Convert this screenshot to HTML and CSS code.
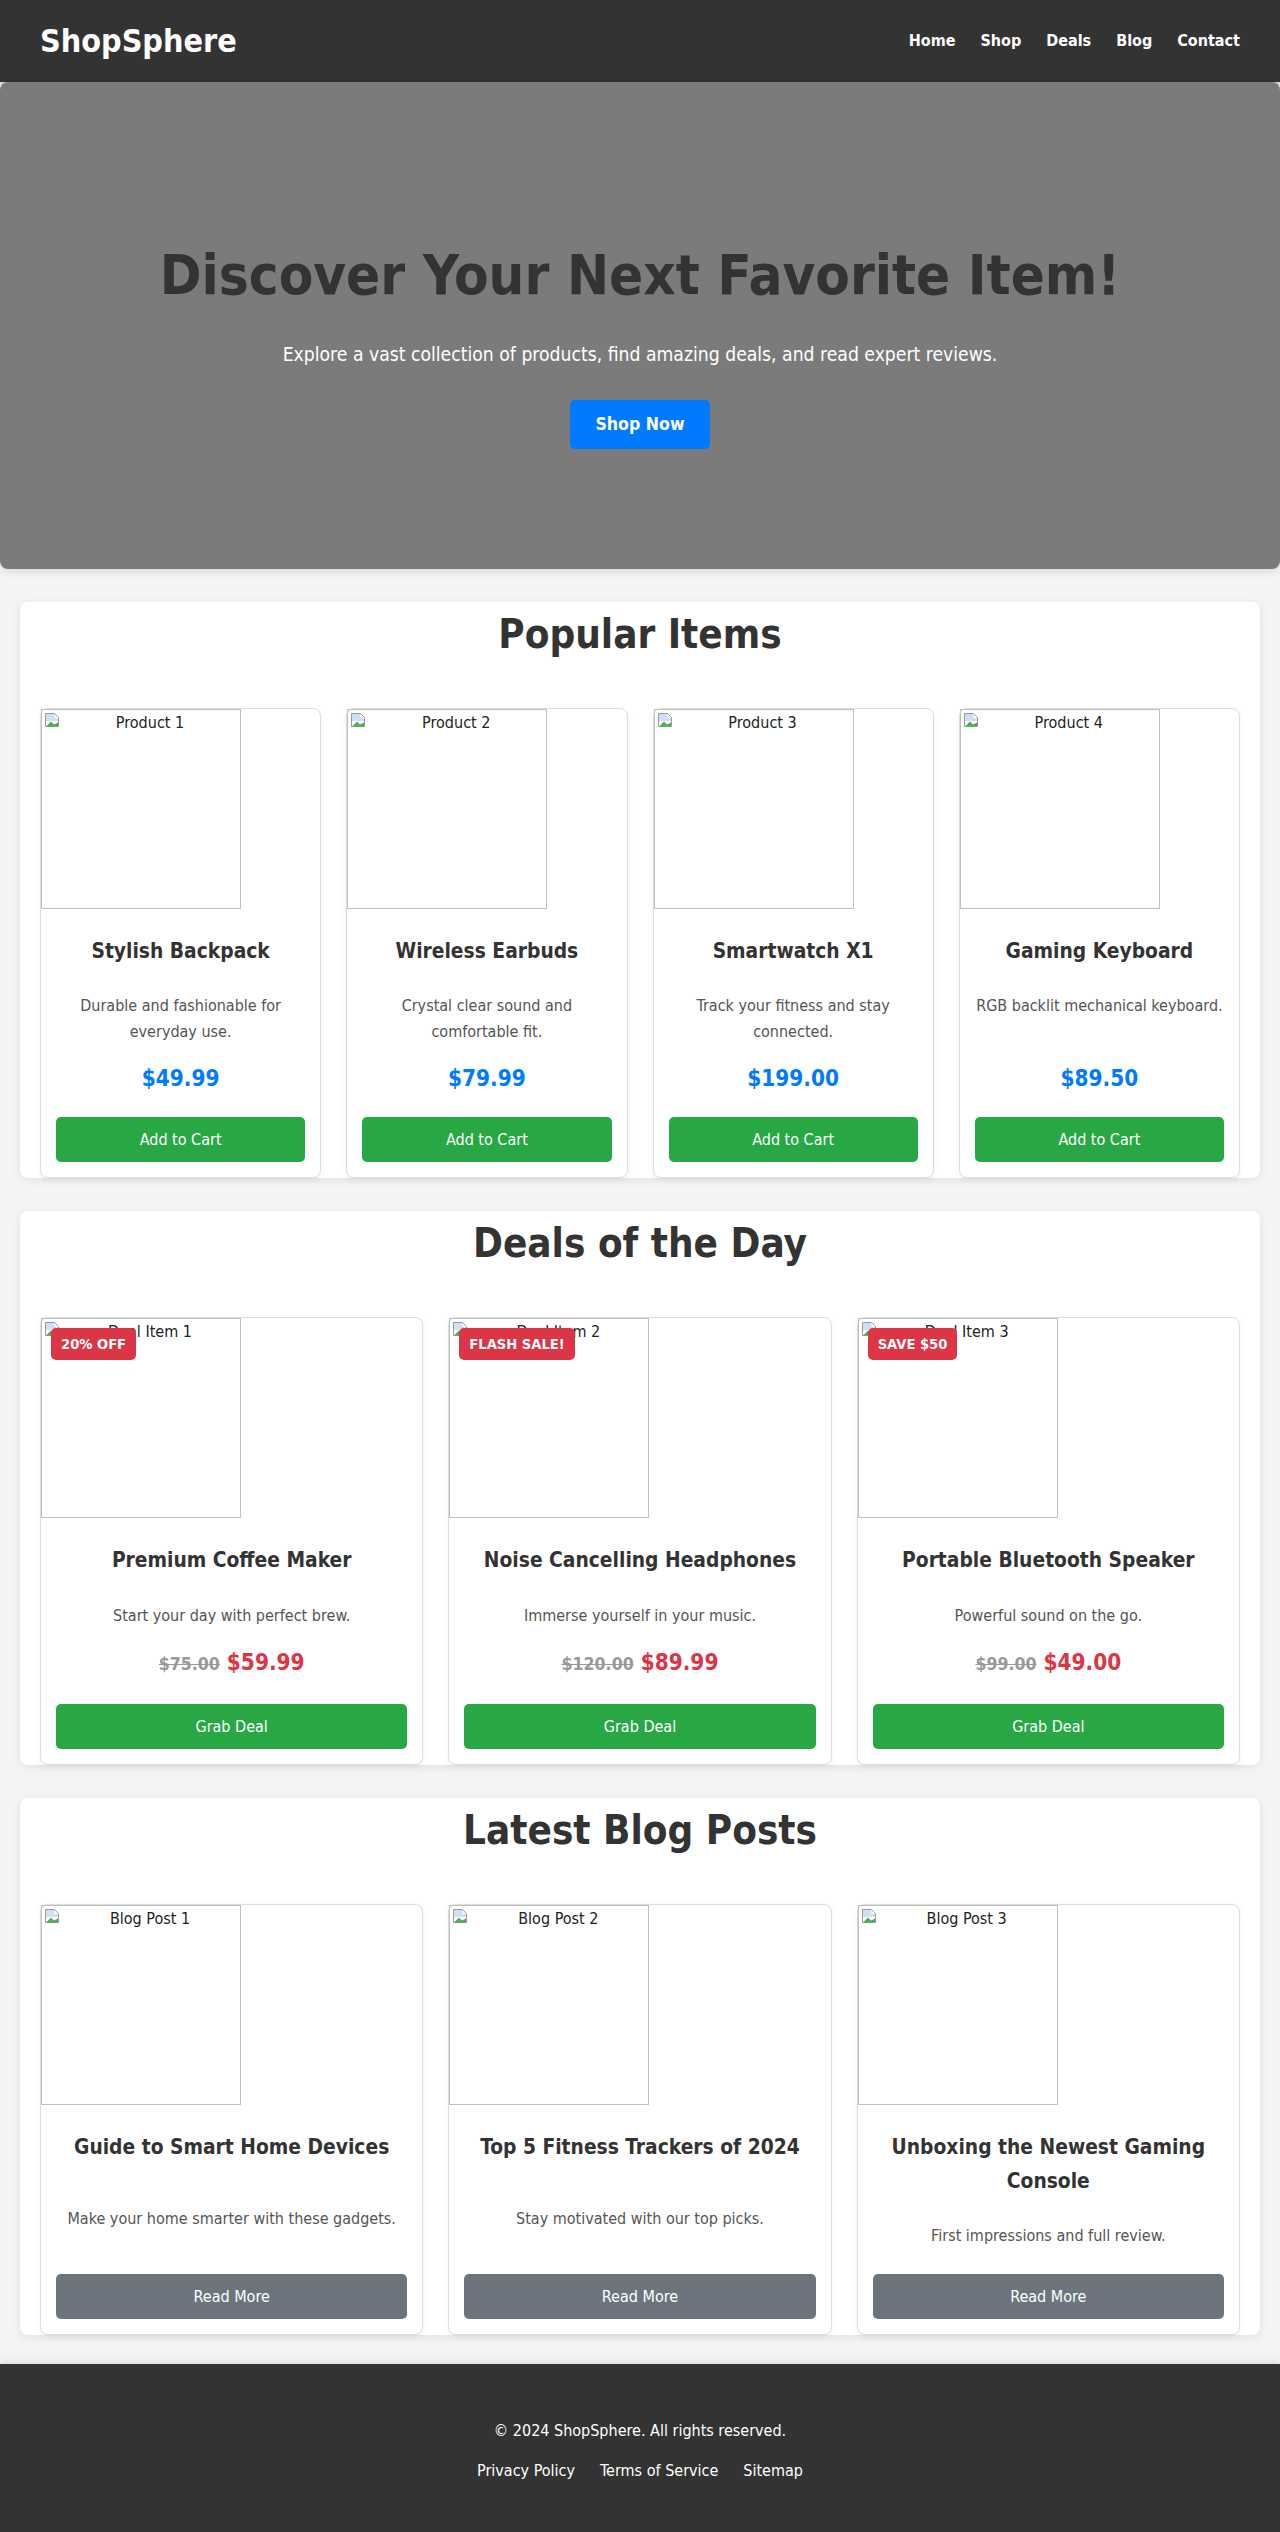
FILE: index.html
```html
<!DOCTYPE html>
<html lang="en">
<head>
<meta charset="UTF-8">
<title>ShopSphere</title>
<link rel="stylesheet" href="styles.css">
</head>
<body>
<header class="site-header">
  <div class="logo">ShopSphere</div>
  <nav class="main-nav">
    <a href="#">Home</a>
    <a href="#">Shop</a>
    <a href="#">Deals</a>
    <a href="#">Blog</a>
    <a href="#">Contact</a>
  </nav>
</header>

<section class="hero">
  <h1 class="hero-title">Discover Your Next Favorite Item!</h1>
  <p class="hero-text">Explore a vast collection of products, find amazing deals, and read expert reviews.</p>
  <a href="#" class="hero-btn">Shop Now</a>
</section>

<section class="panel">
  <h2 class="panel-title">Popular Items</h2>
  <div class="grid grid-4">
    <div class="card">
      <div class="ph"><svg class="ph-icon" viewBox="0 0 16 16"><path d="M1.5 1.5h9l4 4v9h-13z" fill="#fff" stroke="#9a9a9a"/><path d="M2 2h8.5v4H14v3H2z" fill="#cfe0f5"/><path d="M2 14.5l5-5 3 3 4-2v4z" fill="#4caf50"/></svg>Product 1</div>
      <div class="card-body product">
        <h3 class="card-title">Stylish Backpack</h3>
        <p class="card-desc">Durable and fashionable for everyday use.</p>
        <div class="price">$49.99</div>
        <a href="#" class="btn btn-green">Add to Cart</a>
      </div>
    </div>
    <div class="card">
      <div class="ph"><svg class="ph-icon" viewBox="0 0 16 16"><path d="M1.5 1.5h9l4 4v9h-13z" fill="#fff" stroke="#9a9a9a"/><path d="M2 2h8.5v4H14v3H2z" fill="#cfe0f5"/><path d="M2 14.5l5-5 3 3 4-2v4z" fill="#4caf50"/></svg>Product 2</div>
      <div class="card-body product">
        <h3 class="card-title">Wireless Earbuds</h3>
        <p class="card-desc">Crystal clear sound and comfortable fit.</p>
        <div class="price">$79.99</div>
        <a href="#" class="btn btn-green">Add to Cart</a>
      </div>
    </div>
    <div class="card">
      <div class="ph"><svg class="ph-icon" viewBox="0 0 16 16"><path d="M1.5 1.5h9l4 4v9h-13z" fill="#fff" stroke="#9a9a9a"/><path d="M2 2h8.5v4H14v3H2z" fill="#cfe0f5"/><path d="M2 14.5l5-5 3 3 4-2v4z" fill="#4caf50"/></svg>Product 3</div>
      <div class="card-body product">
        <h3 class="card-title">Smartwatch X1</h3>
        <p class="card-desc">Track your fitness and stay connected.</p>
        <div class="price">$199.00</div>
        <a href="#" class="btn btn-green">Add to Cart</a>
      </div>
    </div>
    <div class="card">
      <div class="ph"><svg class="ph-icon" viewBox="0 0 16 16"><path d="M1.5 1.5h9l4 4v9h-13z" fill="#fff" stroke="#9a9a9a"/><path d="M2 2h8.5v4H14v3H2z" fill="#cfe0f5"/><path d="M2 14.5l5-5 3 3 4-2v4z" fill="#4caf50"/></svg>Product 4</div>
      <div class="card-body product">
        <h3 class="card-title">Gaming Keyboard</h3>
        <p class="card-desc">RGB backlit mechanical keyboard.</p>
        <div class="price">$89.50</div>
        <a href="#" class="btn btn-green">Add to Cart</a>
      </div>
    </div>
  </div>
</section>

<section class="panel">
  <h2 class="panel-title">Deals of the Day</h2>
  <div class="grid grid-3">
    <div class="card deal">
      <div class="ph"><svg class="ph-icon" viewBox="0 0 16 16"><path d="M1.5 1.5h9l4 4v9h-13z" fill="#fff" stroke="#9a9a9a"/><path d="M2 2h8.5v4H14v3H2z" fill="#cfe0f5"/><path d="M2 14.5l5-5 3 3 4-2v4z" fill="#4caf50"/></svg>Deal Item 1</div>
      <span class="badge">20% OFF</span>
      <div class="card-body product">
        <h3 class="card-title">Premium Coffee Maker</h3>
        <p class="card-desc">Start your day with perfect brew.</p>
        <div class="price-row"><span class="old-price">$75.00</span> <span class="new-price">$59.99</span></div>
        <a href="#" class="btn btn-green">Grab Deal</a>
      </div>
    </div>
    <div class="card deal">
      <div class="ph"><svg class="ph-icon" viewBox="0 0 16 16"><path d="M1.5 1.5h9l4 4v9h-13z" fill="#fff" stroke="#9a9a9a"/><path d="M2 2h8.5v4H14v3H2z" fill="#cfe0f5"/><path d="M2 14.5l5-5 3 3 4-2v4z" fill="#4caf50"/></svg>Deal Item 2</div>
      <span class="badge">FLASH SALE!</span>
      <div class="card-body product">
        <h3 class="card-title">Noise Cancelling Headphones</h3>
        <p class="card-desc">Immerse yourself in your music.</p>
        <div class="price-row"><span class="old-price">$120.00</span> <span class="new-price">$89.99</span></div>
        <a href="#" class="btn btn-green">Grab Deal</a>
      </div>
    </div>
    <div class="card deal">
      <div class="ph"><svg class="ph-icon" viewBox="0 0 16 16"><path d="M1.5 1.5h9l4 4v9h-13z" fill="#fff" stroke="#9a9a9a"/><path d="M2 2h8.5v4H14v3H2z" fill="#cfe0f5"/><path d="M2 14.5l5-5 3 3 4-2v4z" fill="#4caf50"/></svg>Deal Item 3</div>
      <span class="badge">SAVE $50</span>
      <div class="card-body product">
        <h3 class="card-title">Portable Bluetooth Speaker</h3>
        <p class="card-desc">Powerful sound on the go.</p>
        <div class="price-row"><span class="old-price">$99.00</span> <span class="new-price">$49.00</span></div>
        <a href="#" class="btn btn-green">Grab Deal</a>
      </div>
    </div>
  </div>
</section>

<section class="panel">
  <h2 class="panel-title">Latest Blog Posts</h2>
  <div class="grid grid-3">
    <div class="card">
      <div class="ph"><svg class="ph-icon" viewBox="0 0 16 16"><path d="M1.5 1.5h9l4 4v9h-13z" fill="#fff" stroke="#9a9a9a"/><path d="M2 2h8.5v4H14v3H2z" fill="#cfe0f5"/><path d="M2 14.5l5-5 3 3 4-2v4z" fill="#4caf50"/></svg>Blog Post 1</div>
      <div class="card-body blog">
        <h3 class="card-title">Guide to Smart Home Devices</h3>
        <p class="card-desc">Make your home smarter with these gadgets.</p>
        <a href="#" class="btn btn-grey">Read More</a>
      </div>
    </div>
    <div class="card">
      <div class="ph"><svg class="ph-icon" viewBox="0 0 16 16"><path d="M1.5 1.5h9l4 4v9h-13z" fill="#fff" stroke="#9a9a9a"/><path d="M2 2h8.5v4H14v3H2z" fill="#cfe0f5"/><path d="M2 14.5l5-5 3 3 4-2v4z" fill="#4caf50"/></svg>Blog Post 2</div>
      <div class="card-body blog">
        <h3 class="card-title">Top 5 Fitness Trackers of 2024</h3>
        <p class="card-desc">Stay motivated with our top picks.</p>
        <a href="#" class="btn btn-grey">Read More</a>
      </div>
    </div>
    <div class="card">
      <div class="ph"><svg class="ph-icon" viewBox="0 0 16 16"><path d="M1.5 1.5h9l4 4v9h-13z" fill="#fff" stroke="#9a9a9a"/><path d="M2 2h8.5v4H14v3H2z" fill="#cfe0f5"/><path d="M2 14.5l5-5 3 3 4-2v4z" fill="#4caf50"/></svg>Blog Post 3</div>
      <div class="card-body blog">
        <h3 class="card-title">Unboxing the Newest Gaming Console</h3>
        <p class="card-desc">First impressions and full review.</p>
        <a href="#" class="btn btn-grey">Read More</a>
      </div>
    </div>
  </div>
</section>

<footer class="site-footer">
  <p class="copy">© 2024 ShopSphere. All rights reserved.</p>
  <div class="footer-links">
    <a href="#">Privacy Policy</a>
    <a href="#">Terms of Service</a>
    <a href="#">Sitemap</a>
  </div>
</footer>
</body>
</html>
```

FILE: styles.css
```css
* { box-sizing: border-box; }

body {
  margin: 0;
  background: #f4f4f4;
  color: #333;
  font-family: "DejaVu Sans Condensed", "DejaVu Sans", sans-serif;
  font-stretch: condensed;
  font-size: 16px;
  line-height: 1.6;
}

a { text-decoration: none; }

.site-header {
  background: #333;
  color: #fff;
  height: 82px;
  padding: 0 40px;
  display: flex;
  align-items: center;
  justify-content: space-between;
  box-shadow: 0 2px 5px rgba(0,0,0,0.2);
}

.logo {
  font-size: 32px;
  font-weight: bold;
  line-height: 1.2;
}

.main-nav {
  display: flex;
  gap: 25px;
}

.main-nav a {
  color: #fff;
  font-weight: bold;
  font-size: 16px;
}

.hero {
  background: #7b7b7b;
  height: 487px;
  padding-top: 159px;
  border-radius: 8px;
  box-shadow: 0 2px 10px rgba(0,0,0,0.12);
  display: flex;
  flex-direction: column;
  align-items: center;
  text-align: center;
}

.hero-title {
  font-size: 56px;
  line-height: 67px;
  margin: 0 0 31px;
  color: #333;
}

.hero-text {
  font-size: 19.2px;
  line-height: 31px;
  color: #fff;
  margin: 0 0 30px;
}

.hero-btn {
  display: inline-block;
  background: #007bff;
  color: #fff;
  font-weight: bold;
  font-size: 17.6px;
  height: 49px;
  line-height: 49px;
  padding: 0 25px;
  border-radius: 5px;
}

.panel {
  background: #fff;
  margin: 33px 20px 0;
  padding: 0 20px;
  border-radius: 8px;
  box-shadow: 0 2px 10px rgba(0,0,0,0.08);
}

.panel-title {
  text-align: center;
  font-size: 40px;
  line-height: 64px;
  margin: 0 0 42px;
}

.grid {
  display: grid;
  gap: 25px;
}

.grid-4 { grid-template-columns: repeat(4, 1fr); }
.grid-3 { grid-template-columns: repeat(3, 1fr); }

.card {
  position: relative;
  background: #fff;
  border: 1px solid #ddd;
  border-radius: 8px;
  box-shadow: 0 2px 6px rgba(0,0,0,0.06);
  display: flex;
  flex-direction: column;
  text-align: center;
}

.ph {
  width: 200px;
  height: 200px;
  border: 1px solid #c0c0c0;
  font-size: 16px;
  line-height: 26px;
  color: #222;
  text-align: center;
  padding: 0 0 0 2px;
}

.ph-icon {
  float: left;
  width: 16px;
  height: 16px;
  margin: 2px 0 0 0;
}

.badge {
  position: absolute;
  top: 10px;
  left: 10px;
  background: #dc3545;
  color: #fff;
  font-weight: bold;
  font-size: 14.6px;
  line-height: 22px;
  padding: 5px 10px;
  border-radius: 5px;
}

.card-body {
  flex: 1;
  display: flex;
  flex-direction: column;
  padding: 15px;
}

.card-title {
  font-size: 20.8px;
  line-height: 33.3px;
  margin: 11px 0 0;
}

.card-desc {
  color: #555;
  font-size: 16px;
  line-height: 25.6px;
  margin: 25px 0 0;
}

.product .card-desc { flex-grow: 1; }

.price {
  color: #007bff;
  font-weight: bold;
  font-size: 22.4px;
  line-height: 36px;
  margin: 16px 0 0;
}

.price-row {
  font-weight: bold;
  line-height: 36px;
  margin: 16px 0 0;
}

.old-price {
  color: #999;
  font-size: 17.6px;
  text-decoration: line-through;
  margin-right: 2px;
}

.new-price {
  color: #dc3545;
  font-size: 22.4px;
}

.btn {
  display: block;
  color: #fff;
  height: 45px;
  line-height: 45px;
  border-radius: 5px;
  font-size: 16px;
  margin-top: 21px;
}

.btn-green { background: #28a745; }
.btn-grey { background: #6c757d; }

.blog { justify-content: space-between; }
.blog .btn { margin-top: 25px; }

.site-footer {
  background: #333;
  color: #fff;
  text-align: center;
  margin-top: 29px;
  padding: 54px 20px 51px;
  box-shadow: 0 -2px 6px rgba(0,0,0,0.1);
}

.copy {
  margin: 0 0 14px;
  font-size: 16px;
  line-height: 26px;
}

.footer-links {
  display: flex;
  justify-content: center;
  gap: 25px;
  line-height: 26px;
}

.footer-links a {
  color: #fff;
  font-size: 16px;
}
```
